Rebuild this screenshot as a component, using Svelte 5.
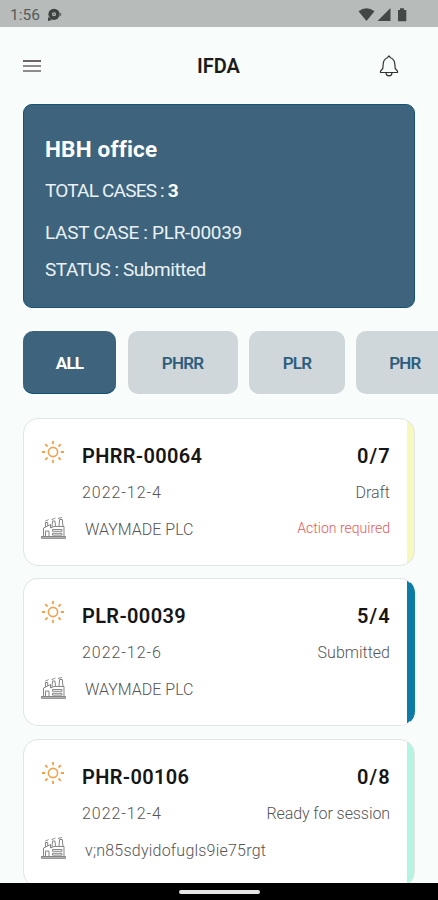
<script>
	let active = "ALL";

	const tabs = [
		{ name: "ALL", width: 93 },
		{ name: "PHRR", width: 110 },
		{ name: "PLR", width: 96 },
		{ name: "PHR", width: 98 },
	];

	const cases = [
		{
			id: "PHRR-00064",
			count: "0/7",
			date: "2022-12-4",
			status: "Draft",
			company: "WAYMADE PLC",
			action: "Action required",
			kind: "draft",
		},
		{
			id: "PLR-00039",
			count: "5/4",
			date: "2022-12-6",
			status: "Submitted",
			company: "WAYMADE PLC",
			kind: "submitted",
		},
		{
			id: "PHR-00106",
			count: "0/8",
			date: "2022-12-4",
			status: "Ready for session",
			company: "v;n85sdyidofugls9ie75rgt",
			kind: "ready",
		},
	];
</script>

<div class="screen">
	<div class="statusbar">
		<span class="clock">1:56</span>
		<svg class="notif" width="16" height="14" viewBox="0 0 16 14">
			<circle cx="7" cy="6.3" r="5.6" fill="#3d4140" />
			<path d="M1 13V9l4 3z" fill="#3d4140" />
			<path d="M12.5 4.5l1.800.8v2.400l-1.800.8z" fill="#6d7270" />
			<circle cx="7" cy="6.3" r="2" fill="#b7bcba" />
			<circle cx="7" cy="6.3" r=".8" fill="#3d4140" />
		</svg>
		<svg class="system" width="50" height="16" viewBox="0 0 50 16">
			<g fill="#434746">
				<path d="M.5 4.3Q8.5-1.6 16.5 4.3L8.5 14z" />
				<path d="M32.5 1v13H19.5z" />
				<path d="M40 3h2V1.2h4V3h2.3v11.3H40z" />
			</g>
		</svg>
	</div>

	<header>
		<button class="menu" aria-label="Menu">
			<svg width="18" height="14" viewBox="0 0 18 14">
				<path d="M0 2h18" stroke="#6a6465" stroke-width="2" />
				<path d="M0 7h18M0 12h18" stroke="#8f8a8b" stroke-width="2" />
			</svg>
		</button>
		<h1>IFDA</h1>
		<button class="bell" aria-label="Notifications">
			<svg width="20" height="22" viewBox="0 0 20 22" fill="none" stroke="#333" stroke-width="1.2">
				<path
					d="M8.5 2.7L10 .9l1.5 1.8C14.3 3.6 15.6 6 15.8 9l.4 4.5 2.3 2.7v1.3h-17v-1.3l2.3-2.7.4-4.5c.2-3 1.5-5.4 4.3-6.3z"
					stroke-linejoin="round"
				/>
				<path d="M7 17.8a3 3 0 0 0 6 0" />
			</svg>
		</button>
	</header>

	<section class="summary">
		<h2>HBH office</h2>
		<p class="total">TOTAL CASES : <strong>3</strong></p>
		<p class="last">LAST CASE : PLR-00039</p>
		<p class="state">STATUS : Submitted</p>
	</section>

	<nav>
		{#each tabs as tab}
			<button
				class="tab"
				class:active={active === tab.name}
				style="width: {tab.width}px"
				on:click={() => (active = tab.name)}>{tab.name}</button
			>
		{/each}
	</nav>

	<main>
		{#each cases as item}
			<article class={item.kind}>
				<svg class="sun" width="24" height="24" viewBox="0 0 24 24" fill="none" stroke="#f3a04b">
					<circle cx="12" cy="12" r="4.6" stroke-width="1.6" />
					<path
						d="M12 1v3.200M12 19.800V23M1 12h3.200M19.800 12H23M4.200 4.200l2.300 2.300M17.500 17.500l2.300 2.300M4.200 19.800l2.300-2.300M17.500 6.500l2.300-2.300"
						stroke-width="1.8"
					/>
				</svg>
				<h3>{item.id}</h3>
				<span class="count">{item.count}</span>

				<span class="date">{item.date}</span>
				<span class="status">{item.status}</span>

				<svg class="factory" width="25" height="22" viewBox="0 0 25 22" fill="none" stroke="#858585">
					<path d="M.5 19.5h24v1.800H.5z" fill="#bbb" />
					<path d="M2.5 19.5V11l7-3.500V11l3.500-1.500h10v10" />
					<path d="M4.5 10V5.500h2.200V9M11 10l.5-6h2.500l.5 5.500M18 9.500l.5-7h2.800l.7 7" />
					<path d="M4.5 4.5c0-2 2.500-.5 3-2M11 3c0-2 2.500-.5 3.500-2.200M17 2c1-2 3-.5 4-1.500" />
					<path d="M4.5 19.5v-5.500h3.500v5.500M11.500 12.500h9.500v1.800h-9.500zM11.500 16.300h9.500v1.800h-9.500z" />
				</svg>
				<span class="company">{item.company}</span>
				{#if item.action}
					<span class="action">{item.action}</span>
				{/if}
			</article>
		{/each}
	</main>

	<footer><span class="handle"></span></footer>
</div>

<style>
	:global(body) {
		background: #f8fcfb;
	}

	.screen {
		background: #f8fcfb;
		color: #1b1b1b;
		display: flex;
		flex-direction: column;
		font-family: Roboto, "Open Sans", sans-serif;
		height: 900px;
		overflow: hidden;
		width: 438px;
	}

	.screen * {
		box-sizing: border-box;
	}

	h1,
	h2,
	h3,
	p {
		margin: 0;
		white-space: nowrap;
	}

	button {
		border: 0;
		font-family: inherit;
		padding: 0;
	}

	svg {
		display: block;
	}

	.statusbar {
		align-items: center;
		background: #b7bcba;
		color: #555a58;
		display: flex;
		flex: none;
		height: 27px;
		padding: 2px 30px 0 10px;
	}

	.clock {
		font-size: 15.5px;
	}

	.notif {
		margin-left: 7px;
	}

	.system {
		margin-left: auto;
	}

	header {
		align-items: center;
		display: grid;
		flex: none;
		grid-template-columns: 1fr auto 1fr;
		height: 77px;
		padding: 0 39px 0 23px;
	}

	header button {
		background: none;
	}

	.menu {
		width: 20px;
	}

	.bell {
		justify-self: end;
	}

	h1 {
		font-size: 20px;
		font-weight: 600;
		padding-left: 15px;
	}

	.summary {
		background: #3d647c;
		border: 1px solid #155273;
		border-radius: 9px;
		color: #eaf1f6;
		flex: none;
		font-size: 19px;
		height: 204px;
		margin: 0 23px;
		padding: 25px 21px 0;
	}

	h2 {
		color: #fff;
		font-size: 22.5px;
		font-variant-ligatures: none;
		font-weight: 700;
		letter-spacing: 0.2px;
		line-height: 38px;
	}

	.summary p {
		letter-spacing: -0.3px;
		line-height: 38px;
	}

	.summary .total {
		letter-spacing: -0.8px;
		line-height: 46px;
	}

	.summary .state {
		letter-spacing: -0.45px;
		line-height: 36px;
	}

	.summary strong {
		color: #fff;
	}

	nav {
		display: flex;
		flex: none;
		gap: 11.5px;
		margin: 23px 0 24px 23px;
	}

	.tab {
		background: #d0d7da;
		border-radius: 10px;
		color: #2d5f7d;
		flex: none;
		font-size: 17px;
		font-weight: 600;
		height: 63px;
		letter-spacing: -0.8px;
	}

	.tab.active {
		background: #3d647c;
		box-shadow: inset 0 -1px #155273;
		color: #fff;
		font-weight: 700;
	}

	.tab:last-child {
		margin-left: -0.7px;
	}

	main {
		display: flex;
		flex: 1;
		flex-direction: column;
		gap: 12.4px;
		min-height: 0;
		overflow: hidden;
		padding: 0 23px;
	}

	article {
		--stripe: #f5f9bd;
		background: linear-gradient(to left, var(--stripe) 7px, #fff 7px);
		border: 1px solid #e2e5e4;
		border-radius: 15px;
		display: grid;
		flex: none;
		grid-template-columns: 41px auto 1fr;
		grid-template-rows: 36px 37px 37px;
		height: 148px;
		line-height: 36px;
		padding: 19px 24px 0 17px;
		white-space: nowrap;
	}

	article.submitted {
		--stripe: #0d7ba6;
		border-right-color: var(--stripe);
	}

	article.ready {
		--stripe: #b5f3e2;
	}

	.sun {
		margin: 2px 0 0 -0.5px;
	}

	.factory {
		margin: 5.5px 0 0 -0.5px;
	}

	h3,
	.count {
		color: #161616;
		font-size: 20px;
		font-weight: 600;
		letter-spacing: 0.35px;
	}

	.count,
	.status,
	.action {
		text-align: right;
	}

	.count {
		letter-spacing: 1.2px;
		margin-right: -1px;
	}

	.date,
	.status,
	.company {
		color: #555;
		font-size: 16px;
		font-weight: 300;
		line-height: 37px;
	}

	.date {
		grid-column: 2;
		letter-spacing: 0.95px;
	}

	.company {
		line-height: 38px;
		padding-left: 3px;
	}

	.ready .company {
		letter-spacing: 0.22px;
	}

	.ready .status {
		letter-spacing: -0.08px;
	}

	.action {
		color: #e65a5c;
		font-size: 14px;
		font-weight: 300;
		line-height: 34px;
	}

	footer {
		background: #000;
		display: flex;
		flex: none;
		height: 17px;
		justify-content: center;
		padding-top: 7px;
	}

	.handle {
		background: #e6e6e6;
		border-radius: 2px;
		height: 4px;
		width: 81px;
	}
</style>
